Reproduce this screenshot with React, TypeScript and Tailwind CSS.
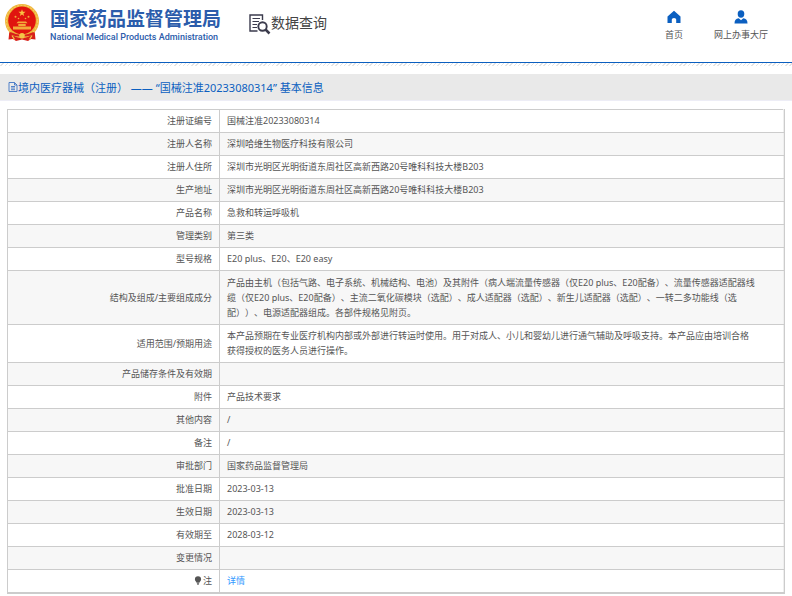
type Row = { label: string; value: string; size?: string; kind?: "note" };

const rows: Row[] = [
  { label: "注册证编号", value: "国械注准20233080314" },
  { label: "注册人名称", value: "深圳哈维生物医疗科技有限公司" },
  { label: "注册人住所", value: "深圳市光明区光明街道东周社区高新西路20号唯科科技大楼B203" },
  { label: "生产地址", value: "深圳市光明区光明街道东周社区高新西路20号唯科科技大楼B203" },
  { label: "产品名称", value: "急救和转运呼吸机" },
  { label: "管理类别", value: "第三类" },
  { label: "型号规格", value: "E20 plus、E20、E20 easy" },
  {
    label: "结构及组成/主要组成成分",
    value:
      "产品由主机（包括气路、电子系统、机械结构、电池）及其附件（病人端流量传感器（仅E20 plus、E20配备）、流量传感器适配器线\n缆（仅E20 plus、E20配备）、主流二氧化碳模块（选配）、成人适配器（选配）、新生儿适配器（选配）、一转二多功能线（选\n配））、电源适配器组成。各部件规格见附页。",
    size: "h-[54px]",
  },
  {
    label: "适用范围/预期用途",
    value:
      "本产品预期在专业医疗机构内部或外部进行转运时使用。用于对成人、小儿和婴幼儿进行通气辅助及呼吸支持。本产品应由培训合格\n获得授权的医务人员进行操作。",
  },
  { label: "产品储存条件及有效期", value: "" },
  { label: "附件", value: "产品技术要求" },
  { label: "其他内容", value: "/" },
  { label: "备注", value: "/" },
  { label: "审批部门", value: "国家药品监督管理局" },
  { label: "批准日期", value: "2023-03-13" },
  { label: "生效日期", value: "2023-03-13" },
  { label: "有效期至", value: "2028-03-12" },
  { label: "变更情况", value: "" },
  { label: "注", value: "详情", kind: "note" },
];

function Emblem() {
  return (
    <svg viewBox="0 0 36 38" className="h-[38px] w-9 shrink-0" aria-hidden="true">
      <path d="M5.500 26 L4.500 35.500 L9 35 L12 37 L18 35.500 L24 37 L27 35 L31.500 35.500 L30.500 26 Z" fill="#d8201a" />
      <circle cx="18" cy="17" r="17" fill="#efb53a" />
      <circle cx="18" cy="17" r="15.600" fill="none" stroke="#f5cb62" strokeWidth="1.200" strokeDasharray="2 1.400" />
      <circle cx="18" cy="16.400" r="13.800" fill="#e0140f" />
      <path d="M18 5.200l.9 2.600h2.700l-2.200 1.600.8 2.600L18 10.400l-2.200 1.600.8-2.600-2.200-1.600h2.700z" fill="#f9c243" />
      <g fill="#f2a93a">
        <circle cx="11.500" cy="12.800" r="1" />
        <circle cx="24.500" cy="12.800" r="1" />
        <circle cx="14.500" cy="14.500" r=".8" />
        <circle cx="21.500" cy="14.500" r=".8" />
        <path d="M14 17.500h8l1.500 1.800h-11zM14.300 20h7.400v2h-7.400zM9 22.600h18v2.800H9z" />
      </g>
      <path d="M6 29Q18 35 30 29" fill="none" stroke="#d8201a" strokeWidth="2.200" />
      <circle cx="18" cy="31.800" r="2.800" fill="#f3c548" />
      <path d="M8 31.500l2.500 4M28 31.500l-2.500 4" stroke="#f3c548" strokeWidth="1.300" />
    </svg>
  );
}

function SearchDoc() {
  return (
    <svg viewBox="0 0 22 21" className="h-[21px] w-[22px] shrink-0" fill="none" stroke="#3b3b4d" aria-hidden="true">
      <path d="M13.500 6V1H1v16h7.500" strokeWidth="1.400" />
      <path d="M3.500 4.500H11M3.500 7.500H10M3.500 10.500H8M3.500 13.500H8" strokeWidth="1.200" />
      <circle cx="13.500" cy="12.500" r="4.200" strokeWidth="1.900" />
      <path d="M16.500 15.500l4 4" strokeWidth="2.500" />
    </svg>
  );
}

function HomeIcon() {
  return (
    <svg viewBox="0 0 14 14" className="size-3.5" fill="#0b5fc0" aria-hidden="true">
      <path d="M7 .8 L13.500 6.500V13H9.200V9.500Q9.200 8 7 8T4.800 9.500V13H.5V6.500Z" />
    </svg>
  );
}

function UserIcon() {
  return (
    <svg viewBox="0 0 14 14" className="size-3.5" fill="#0b5fc0" aria-hidden="true">
      <ellipse cx="7" cy="4" rx="3.300" ry="3.700" />
      <path d="M.5 13.500Q.5 8.800 4.700 8.300L7 10.200 9.300 8.300Q13.500 8.800 13.500 13.500Z" />
    </svg>
  );
}

function DocIcon() {
  return (
    <svg viewBox="0 0 10 10" className="size-2.5 shrink-0" fill="none" stroke="#3f74c4" strokeWidth=".9" aria-hidden="true">
      <path d="M1 .5h5.500L9 3v6.500H1zM6.500.5V3H9M3 4.500h4M3 6h4M3 7.700h4" />
    </svg>
  );
}

function BulbIcon() {
  return (
    <svg viewBox="0 0 8 9" className="mr-px inline-block h-[9px] w-2 align-[-1px]" fill="#555" aria-hidden="true">
      <path d="M4 .3a3.100 3.100 0 0 1 3.100 3.100C7.100 5 5.600 5.500 5.400 6.700H2.600C2.400 5.500.9 5 .9 3.400A3.100 3.100 0 0 1 4 .3zM2.900 7.200h2.200v.7L4.500 8.700h-1l-.6-.8z" />
    </svg>
  );
}

export default function App() {
  return (
    <div className="bg-white font-['Noto_Sans','Noto_Sans_CJK_SC',sans-serif] text-[9px] leading-[15px] text-[#555] [text-spacing-trim:space-all]">
      <header className="flex h-[62px] items-start justify-between pr-6 pl-1">
        <div className="flex items-start">
          <a href="#" className="flex items-start gap-2.5 pt-1 text-[#2b5cab]">
            <Emblem />
            <span className="flex flex-col">
              <span className="font-['Noto_Sans_CJK_SC',sans-serif] text-[19px] leading-[27px] font-bold">国家药品监督管理局</span>
              <span className="font-['Roboto',sans-serif] text-[9px] leading-3 font-medium">
                National Medical Products Administration
              </span>
            </span>
          </a>
          <div className="ml-7 flex items-start pt-3.5">
            <SearchDoc />
            <h1 className="text-[14px] leading-[18px] text-[#444]">数据查询</h1>
          </div>
        </div>
        <nav className="flex gap-[31px] pt-2.5">
          <a href="#" className="flex flex-col items-center gap-[3px]">
            <HomeIcon />
            首页
          </a>
          <a href="#" className="flex flex-col items-center gap-[3px]">
            <UserIcon />
            网上办事大厅
          </a>
        </nav>
      </header>
      <div className="h-px bg-[#0b5fc0]" />
      <div className="h-[3px] bg-[repeating-linear-gradient(135deg,#fff_0px,#fff_2px,#e4e4e4_2px,#e4e4e4_3px)]" />

      <h2 className="mt-2 flex h-[27px] items-center border-b border-[#ededf6] bg-[#e9e9e9] pl-2 text-[11px] text-[#0b5fc0]">
        <DocIcon />
        <span>境内医疗器械（注册） —— “国械注准20233080314” 基本信息</span>
      </h2>

      <main className="mx-[7px] mt-2 border-r border-b border-[#ccc]">
        <table className="w-full border-collapse border border-[#ccc] border-r-[#eee]">
          <tbody>
            {rows.map((row) => (
              <tr key={row.label} className={`border-b border-[#ccc] even:bg-[#f7f7f7] ${row.size ?? ""}`}>
                <th scope="row" className="w-[212px] border-r border-[#ccc] px-[7px] pt-[3px] pb-1 text-right font-normal">
                  {row.kind === "note" && <BulbIcon />}
                  {row.label}
                </th>
                <td className="px-[7px] pt-[3px] pb-1 whitespace-pre-line">
                  {row.kind === "note" ? (
                    <a href="#" className="text-[#3399ff]">
                      {row.value}
                    </a>
                  ) : (
                    row.value
                  )}
                </td>
              </tr>
            ))}
          </tbody>
        </table>
      </main>
    </div>
  );
}
